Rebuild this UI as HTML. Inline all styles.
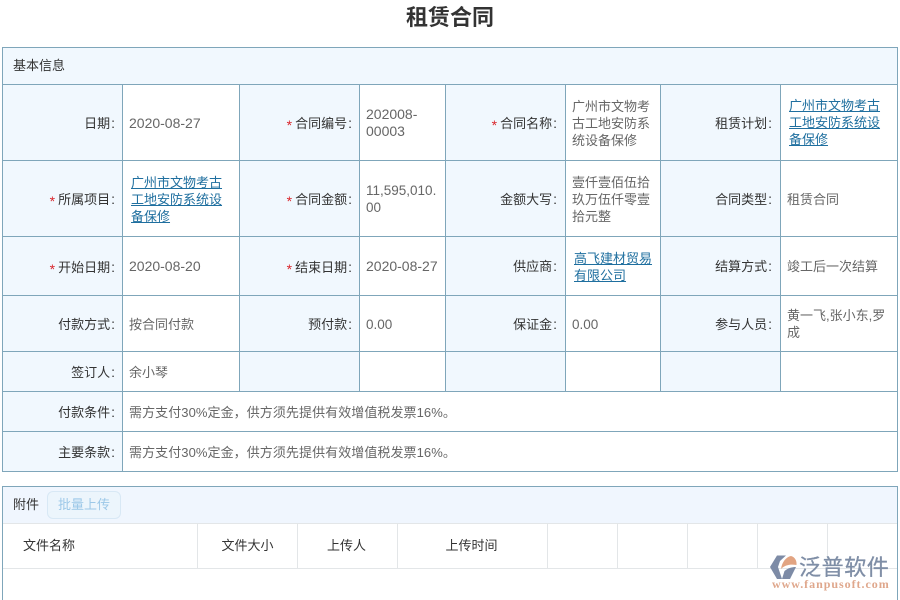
<!DOCTYPE html>
<html lang="zh-CN">
<head>
<meta charset="utf-8">
<title>租赁合同</title>
<style>
html,body{margin:0;padding:0;background:#fff}
body{width:900px;height:600px;position:relative;overflow:hidden;font-family:"Liberation Sans","Noto Sans CJK SC",sans-serif;font-size:13px;color:#333}
.a{position:absolute}
.h{position:absolute;height:1px;background:#7fa6ba}
.v{position:absolute;width:1px;background:#7fa6ba}
.bg{position:absolute;background:#f1f8fe}
.l,.c{position:absolute;display:flex;align-items:center;line-height:17px}
.l{justify-content:flex-end;color:#333;white-space:nowrap}
.c{color:#666}
.l i{font-style:normal;color:#d9262c;margin-right:3px;font-size:14px;position:relative;top:2px}
.l u{text-decoration:none;font-size:14px;margin-left:1px}
.n{font-size:14px}
.m{font-size:13.5px}
a{color:#1f6f9f;text-decoration:underline}
.g{position:absolute;background:#e3e6e8}
.th{position:absolute;top:524px;height:44px;line-height:43px;color:#333;text-align:center}
</style>
</head>
<body>
<div class="a" style="left:0;top:3px;width:900px;text-align:center;font-size:22px;font-weight:700;line-height:30px;color:#333">租赁合同</div>

<div class="bg" style="left:3px;top:48px;width:894px;height:36px"></div>
<div class="bg" style="left:3px;top:85px;width:119px;height:386px"></div>
<div class="bg" style="left:240px;top:85px;width:119px;height:306px"></div>
<div class="bg" style="left:446px;top:85px;width:119px;height:306px"></div>
<div class="bg" style="left:661px;top:85px;width:119px;height:306px"></div>

<div class="h" style="left:2px;top:47px;width:896px"></div>
<div class="h" style="left:2px;top:84px;width:896px"></div>
<div class="h" style="left:2px;top:160px;width:896px"></div>
<div class="h" style="left:2px;top:236px;width:896px"></div>
<div class="h" style="left:2px;top:295px;width:896px"></div>
<div class="h" style="left:2px;top:351px;width:896px"></div>
<div class="h" style="left:2px;top:391px;width:896px"></div>
<div class="h" style="left:2px;top:431px;width:896px"></div>
<div class="h" style="left:2px;top:471px;width:896px"></div>
<div class="v" style="left:2px;top:47px;height:425px"></div>
<div class="v" style="left:897px;top:47px;height:425px"></div>
<div class="v" style="left:122px;top:84px;height:388px"></div>
<div class="v" style="left:239px;top:84px;height:307px"></div>
<div class="v" style="left:359px;top:84px;height:307px"></div>
<div class="v" style="left:445px;top:84px;height:307px"></div>
<div class="v" style="left:565px;top:84px;height:307px"></div>
<div class="v" style="left:660px;top:84px;height:307px"></div>
<div class="v" style="left:780px;top:84px;height:307px"></div>

<div class="a" style="left:13px;top:57px;line-height:18px">基本信息</div>

<!-- row 1 -->
<div class="l" style="left:3px;top:85px;width:112px;height:76px">日期<u>:</u></div>
<div class="c n" style="left:129px;top:85px;width:106px;height:76px">2020-08-27</div>
<div class="l" style="left:240px;top:85px;width:112px;height:76px"><i>*</i>合同编号<u>:</u></div>
<div class="c n" style="left:366px;top:85px;width:76px;height:76px">202008-<br>00003</div>
<div class="l" style="left:446px;top:85px;width:111px;height:76px"><i>*</i>合同名称<u>:</u></div>
<div class="c" style="left:572px;top:85px;width:86px;height:76px">广州市文物考<br>古工地安防系<br>统设备保修</div>
<div class="l" style="left:661px;top:85px;width:111px;height:76px">租赁计划<u>:</u></div>
<div class="c" style="left:789px;top:84px;width:106px;height:76px"><a>广州市文物考古<br>工地安防系统设<br>备保修</a></div>

<!-- row 2 -->
<div class="l" style="left:3px;top:161px;width:112px;height:76px"><i>*</i>所属项目<u>:</u></div>
<div class="c" style="left:131px;top:161px;width:106px;height:76px"><a>广州市文物考古<br>工地安防系统设<br>备保修</a></div>
<div class="l" style="left:240px;top:161px;width:112px;height:76px"><i>*</i>合同金额<u>:</u></div>
<div class="c m" style="left:366px;top:161px;width:76px;height:76px">11,595,010.<br>00</div>
<div class="l" style="left:446px;top:161px;width:111px;height:76px">金额大写<u>:</u></div>
<div class="c" style="left:572px;top:161px;width:86px;height:76px">壹仟壹佰伍拾<br>玖万伍仟零壹<br>拾元整</div>
<div class="l" style="left:661px;top:161px;width:111px;height:76px">合同类型<u>:</u></div>
<div class="c" style="left:787px;top:161px;width:106px;height:76px">租赁合同</div>

<!-- row 3 -->
<div class="l" style="left:3px;top:238px;width:112px;height:59px"><i>*</i>开始日期<u>:</u></div>
<div class="c n" style="left:129px;top:237px;width:106px;height:59px">2020-08-20</div>
<div class="l" style="left:240px;top:238px;width:112px;height:59px"><i>*</i>结束日期<u>:</u></div>
<div class="c n" style="left:366px;top:237px;width:76px;height:59px;white-space:nowrap">2020-08-27</div>
<div class="l" style="left:446px;top:237px;width:111px;height:59px">供应商<u>:</u></div>
<div class="c" style="left:574px;top:237px;width:86px;height:59px"><a>高飞建材贸易<br>有限公司</a></div>
<div class="l" style="left:661px;top:237px;width:111px;height:59px">结算方式<u>:</u></div>
<div class="c" style="left:787px;top:237px;width:106px;height:59px">竣工后一次结算</div>

<!-- row 4 -->
<div class="l" style="left:3px;top:296px;width:112px;height:56px">付款方式<u>:</u></div>
<div class="c" style="left:129px;top:296px;width:106px;height:56px">按合同付款</div>
<div class="l" style="left:240px;top:296px;width:112px;height:56px">预付款<u>:</u></div>
<div class="c m" style="left:366px;top:296px;width:76px;height:56px">0.00</div>
<div class="l" style="left:446px;top:296px;width:111px;height:56px">保证金<u>:</u></div>
<div class="c m" style="left:572px;top:296px;width:86px;height:56px">0.00</div>
<div class="l" style="left:661px;top:296px;width:111px;height:56px">参与人员<u>:</u></div>
<div class="c" style="left:787px;top:296px;width:106px;height:56px">黄一飞,张小东,罗<br>成</div>

<!-- row 5 -->
<div class="l" style="left:3px;top:352px;width:112px;height:40px">签订人<u>:</u></div>
<div class="c" style="left:129px;top:352px;width:106px;height:40px">余小琴</div>

<!-- row 6,7 -->
<div class="l" style="left:3px;top:392px;width:112px;height:40px">付款条件<u>:</u></div>
<div class="c" style="left:129px;top:392px;width:760px;height:40px;letter-spacing:.07px">需方支付30%定金，供方须先提供有效增值税发票16%。</div>
<div class="l" style="left:3px;top:432px;width:112px;height:40px">主要条款<u>:</u></div>
<div class="c" style="left:129px;top:432px;width:760px;height:40px;letter-spacing:.07px">需方支付30%定金，供方须先提供有效增值税发票16%。</div>

<!-- attachments -->
<div class="bg" style="left:3px;top:487px;width:894px;height:36px;background:#f0f6fe"></div>
<div class="h" style="left:2px;top:486px;width:896px"></div>
<div class="v" style="left:2px;top:486px;height:114px"></div>
<div class="v" style="left:897px;top:486px;height:114px"></div>
<div class="a" style="left:13px;top:496px;line-height:18px">附件</div>
<div class="a" style="left:47px;top:491px;width:72px;height:26px;border:1px solid #d8e8f5;border-radius:6px;background:#ecf5fc;color:#9cc8e8;text-align:center;line-height:25px">批量上传</div>

<div class="g" style="left:3px;top:523px;width:894px;height:1px"></div>
<div class="g" style="left:3px;top:568px;width:894px;height:1px"></div>
<div class="g" style="left:197px;top:524px;width:1px;height:44px"></div>
<div class="g" style="left:297px;top:524px;width:1px;height:44px"></div>
<div class="g" style="left:397px;top:524px;width:1px;height:44px"></div>
<div class="g" style="left:547px;top:524px;width:1px;height:44px"></div>
<div class="g" style="left:617px;top:524px;width:1px;height:44px"></div>
<div class="g" style="left:687px;top:524px;width:1px;height:44px"></div>
<div class="g" style="left:757px;top:524px;width:1px;height:44px"></div>
<div class="g" style="left:827px;top:524px;width:1px;height:44px"></div>
<div class="th" style="left:23px">文件名称</div>
<div class="th" style="left:198px;width:99px">文件大小</div>
<div class="th" style="left:297px;width:99px">上传人</div>
<div class="th" style="left:397px;width:149px">上传时间</div>

<!-- watermark logo -->
<svg class="a" style="left:769px;top:554px" width="30" height="26" viewBox="0 0 30 26">
<path d="M8 1.5H17L11 7 9 13 13 25H8L1 13Z" fill="#7d8ba6"/>
<path d="M12 15C13 8 17 3 22 2C26 3 28 7 27.5 11C21 10 16 11 12 15Z" fill="#e2a482"/>
<path d="M13 25L15.5 17C19 14 23 13 27 13L21 25Z" fill="#7d8ba6"/>
</svg>
<div class="a" style="left:799px;top:554px;font-size:22px;line-height:28px;color:#7f8ea6;letter-spacing:.6px;white-space:nowrap;-webkit-text-stroke:.3px #7f8ea6">泛普软件</div>
<div class="a" style="left:772px;top:577px;font-family:'Liberation Serif',serif;font-size:12px;font-weight:700;line-height:14px;color:#dfa78c;letter-spacing:.96px;white-space:nowrap">www.fanpusoft.com</div>
</body>
</html>
